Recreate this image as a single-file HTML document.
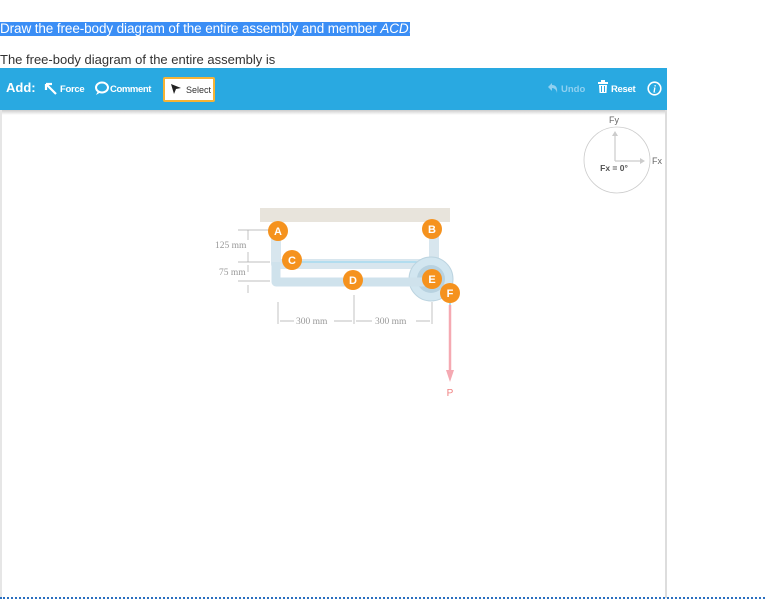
<!DOCTYPE html>
<html><head><meta charset="utf-8"><style>
*{margin:0;padding:0;box-sizing:border-box}
body{width:765px;height:606px;background:#fff;font-family:"Liberation Sans",sans-serif;position:relative;overflow:hidden}
.abs{position:absolute}
</style></head><body>
<div class="abs" style="left:0;top:22px;height:14px;width:410px;background:#3b8ef5"></div>
<div class="abs" style="left:0;top:21px;font-size:13.5px;color:#fff;white-space:nowrap;letter-spacing:-0.1px">Draw the free-body diagram of the entire assembly and member <i>ACD</i>.</div>
<div class="abs" style="left:0;top:52px;font-size:13px;color:#333;white-space:nowrap">The free-body diagram of the entire assembly is</div>
<div class="abs" style="left:0;top:68px;width:667px;height:42px;background:#29a9e1"></div>
<div class="abs" style="left:0;top:110px;width:667px;height:5px;background:linear-gradient(#ccc,#fff)"></div>
<div class="abs" style="left:665px;top:110px;width:2px;height:488px;background:#ddd"></div>
<div class="abs" style="left:0;top:110px;width:2px;height:488px;background:#e6e6e6"></div>
<div class="abs" style="left:0;top:597px;width:765px;border-top:2px dotted #2a6fc0"></div>
<div class="abs" style="left:6px;top:80px;color:#fff;font-weight:bold;font-size:13px">Add:</div>
<svg class="abs" style="left:44px;top:82px" width="14" height="14" viewBox="0 0 14 14"><path d="M2 2 L12 12 M2 2 L2 8 M2 2 L8 2" stroke="#fff" stroke-width="2.2" fill="none"/></svg>
<div class="abs" style="left:60px;top:84px;color:#fff;font-weight:bold;font-size:9.5px;letter-spacing:-0.3px">Force</div>
<svg class="abs" style="left:94px;top:81px" width="16" height="15" viewBox="0 0 16 15"><ellipse cx="8" cy="6.5" rx="6" ry="5" stroke="#fff" stroke-width="2" fill="none"/><path d="M4 10 L2 14 L7 11" fill="#fff"/></svg>
<div class="abs" style="left:110px;top:84px;color:#fff;font-weight:bold;font-size:9.5px;letter-spacing:-0.4px">Comment</div>
<div class="abs" style="left:163px;top:77px;width:52px;height:25px;background:#fff;border:2px solid #f5b335;border-radius:2px"></div>
<svg class="abs" style="left:170px;top:83px" width="12" height="12" viewBox="0 0 12 12"><path d="M1 1 L11 5 L6 6 L4 11 Z" fill="#222"/></svg>
<div class="abs" style="left:186px;top:85px;color:#333;font-size:9px">Select</div>
<svg class="abs" style="left:547px;top:82px" width="12" height="12" viewBox="0 0 12 12"><path d="M5 1 L1 5 L5 9 L5 6 Q9 6 10 11 Q11 3 5 3 Z" fill="#8fd0f0"/></svg>
<div class="abs" style="left:561px;top:84px;color:#8fd0f0;font-weight:bold;font-size:9.5px">Undo</div>
<svg class="abs" style="left:597px;top:80px" width="12" height="14" viewBox="0 0 12 14"><rect x="1" y="2" width="10" height="2" fill="#fff"/><rect x="4" y="0" width="4" height="2" fill="#fff"/><path d="M2 5 H10 L9.5 13 H2.5 Z" fill="#fff"/><path d="M4.5 6 V12 M7.5 6 V12" stroke="#29a9e1" stroke-width="1"/></svg>
<div class="abs" style="left:611px;top:84px;color:#fff;font-weight:bold;font-size:9.5px;letter-spacing:-0.3px">Reset</div>
<svg class="abs" style="left:647px;top:81px" width="15" height="15" viewBox="0 0 15 15"><circle cx="7.5" cy="7.5" r="6.3" stroke="#fff" stroke-width="1.6" fill="none"/><text x="7.5" y="11.5" font-size="10" font-style="italic" font-weight="bold" fill="#fff" text-anchor="middle" font-family="Liberation Serif">i</text></svg>
<svg class="abs" style="left:570px;top:110px" width="100" height="90" viewBox="0 0 100 90">
<text x="44" y="13" font-size="9" fill="#666" text-anchor="middle">Fy</text>
<circle cx="47" cy="50" r="33" fill="none" stroke="#ccc" stroke-width="0.8"/>
<path d="M45 51 V22 M45 51 H73" stroke="#ccc" stroke-width="1.2"/>
<path d="M42 26 L45 21 L48 26 Z M70 48 L75 51 L70 54 Z" fill="#ccc"/>
<text x="44" y="61" font-size="8.5" fill="#555" text-anchor="middle" font-weight="bold">Fx = 0°</text>
<text x="82" y="54" font-size="9" fill="#666">Fx</text>
</svg>
<svg class="abs" style="left:210px;top:200px" width="260" height="200" viewBox="0 0 260 200">
<rect x="50" y="8" width="190" height="14" fill="#e8e4dc"/>
<path d="M66 28 V64 H218" stroke="#d8e6ee" stroke-width="10" fill="none" stroke-linejoin="round"/>
<path d="M224 28 V60" stroke="#d8e6ee" stroke-width="10"/>
<path d="M80 62 H224" stroke="#9cd8f0" stroke-width="1.2"/>
<circle cx="221" cy="79" r="22" fill="#d2e6f0" stroke="#bcd4e0"/>
<circle cx="221" cy="79" r="14" fill="#b8d2e0"/>
<path d="M66 62 V82 H220" stroke="#cfe2ec" stroke-width="9" fill="none" stroke-linejoin="round"/>
<path d="M240 95 V180" stroke="#6cc6ea" stroke-width="1.2"/>
<path d="M240 105 V170" stroke="#f5a9b2" stroke-width="2.5"/>
<path d="M236 170 L240 182 L244 170 Z" fill="#f5a9b2"/>
<text x="240" y="196" font-size="10" fill="#f08080" text-anchor="middle">P</text>
<g font-family="Liberation Serif" font-size="9.5" fill="#999">
<text x="5" y="48">125 mm</text><text x="9" y="75">75 mm</text>
<text x="86" y="124">300 mm</text><text x="165" y="124">300 mm</text>
</g>
<path d="M28 30 H60 M28 62 H60 M28 81 H60 M38 30 V40 M38 52 V62 M38 65 V72 M38 85 V93 M68 102 V124 M144 95 V124 M222 102 V124 M70 121 H84 M124 121 H142 M146 121 H162 M206 121 H220" stroke="#aaa" stroke-width="0.7"/>
<g font-weight="bold" font-size="11" fill="#fff" text-anchor="middle">
<circle cx="68" cy="31" r="10" fill="#f5921e"/><text x="68" y="35">A</text>
<circle cx="222" cy="29" r="10" fill="#f5921e"/><text x="222" y="33">B</text>
<circle cx="82" cy="60" r="10" fill="#f5921e"/><text x="82" y="64">C</text>
<circle cx="143" cy="80" r="10" fill="#f5921e"/><text x="143" y="84">D</text>
<circle cx="222" cy="79" r="10" fill="#f5921e"/><text x="222" y="83">E</text>
<circle cx="240" cy="93" r="10" fill="#f5921e"/><text x="240" y="97">F</text>
</g>
</svg>
</body></html>
